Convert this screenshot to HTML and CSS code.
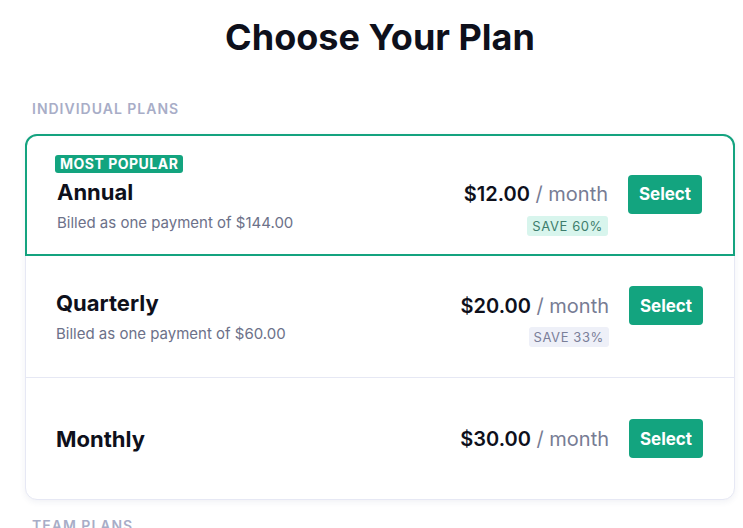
FILE: index.html
```html
<!DOCTYPE html>
<html lang="en">
<head>
<meta charset="utf-8">
<title>Choose Your Plan</title>
<link rel="stylesheet" href="styles.css">
</head>
<body>
<main class="page">
  <h1 class="page-title">Choose Your Plan</h1>

  <section class="group">
    <h2 class="group-label">Individual Plans</h2>
    <div class="plans">
      <div class="plan plan--featured">
        <span class="popular">Most Popular</span>
        <div class="plan-info">
          <div class="plan-name">Annual</div>
          <div class="plan-note">Billed as one payment of $144.00</div>
        </div>
        <div class="plan-buy">
          <div class="price"><span class="amount">$12.00</span> / month</div>
          <button class="select">Select</button>
          <span class="save save--green">SAVE 60%</span>
        </div>
      </div>

      <div class="plan">
        <div class="plan-info">
          <div class="plan-name">Quarterly</div>
          <div class="plan-note">Billed as one payment of $60.00</div>
        </div>
        <div class="plan-buy">
          <div class="price"><span class="amount">$20.00</span> / month</div>
          <button class="select">Select</button>
          <span class="save">SAVE 33%</span>
        </div>
      </div>

      <div class="plan plan--last">
        <div class="plan-info">
          <div class="plan-name">Monthly</div>
        </div>
        <div class="plan-buy">
          <div class="price"><span class="amount">$30.00</span> / month</div>
          <button class="select">Select</button>
        </div>
      </div>
    </div>
  </section>

  <section class="group">
    <h2 class="group-label">Team Plans</h2>
  </section>
</main>
</body>
</html>
```

FILE: styles.css
```css
* { box-sizing: border-box; }

html, body {
  margin: 0;
  padding: 0;
  background: #ffffff;
}

body {
  font-family: Inter, "Noto Sans", "Liberation Sans", sans-serif;
  color: #11131f;
  overflow: hidden;
}

.page {
  width: 710px;
  margin-left: 25px;
}

.page-title {
  margin: 15px 0 42px;
  text-align: center;
  font-size: 36px;
  font-weight: 700;
  line-height: 44px;
  color: #0e101b;
}

.group-label {
  margin: 0 0 17px 7px;
  font-size: 14px;
  line-height: 16px;
  font-weight: 600;
  letter-spacing: 1px;
  text-transform: uppercase;
  color: #a8adc7;
}

.plans {
  border: 1px solid #e6e8f4;
  border-radius: 12px;
  background: #fff;
  box-shadow: 0 2px 6px rgba(40, 50, 110, 0.07);
  margin-bottom: 18px;
}

.plan {
  position: relative;
  display: flex;
  align-items: center;
  justify-content: space-between;
  min-height: 122px;
  padding: 0 31px 0 30px;
  border-bottom: 1px solid #e6e8f4;
}

.plan--featured {
  margin: -1px -1px 0;
  min-height: 122px;
  padding-top: 20px;
  border: 2px solid #14a37f;
  border-radius: 12px 12px 0 0;
}

.plan--last {
  min-height: 121px;
  border-bottom: none;
}

.popular {
  position: absolute;
  top: 19px;
  left: 28px;
  height: 18px;
  padding: 0 5px;
  border-radius: 3px;
  background: #13a47f;
  color: #fff;
  font-size: 14px;
  line-height: 18px;
  font-weight: 700;
  letter-spacing: 0.5px;
  text-transform: uppercase;
}

.plan-name {
  font-size: 22px;
  line-height: 26px;
  font-weight: 700;
  color: #0e101b;
}

.plan-note {
  margin-top: 9px;
  font-size: 15px;
  line-height: 18px;
  color: #6c7189;
}

.plan-buy {
  display: grid;
  grid-template-columns: auto auto;
  column-gap: 20px;
  row-gap: 2px;
  align-items: center;
}

.price {
  font-size: 20px;
  line-height: 24px;
  color: #777c94;
  white-space: nowrap;
}

.amount {
  font-weight: 600;
  color: #0e101b;
}

.select {
  width: 74px;
  height: 39px;
  border: none;
  border-radius: 4px;
  background: #13a47f;
  color: #fff;
  font-family: inherit;
  font-size: 17px;
  font-weight: 700;
  padding: 0;
  cursor: pointer;
}

.save {
  grid-column: 1;
  justify-self: end;
  height: 20px;
  padding: 0 5px;
  border-radius: 3px;
  background: #eef0f8;
  color: #7a7f98;
  font-size: 13px;
  line-height: 20px;
  letter-spacing: 0.6px;
}

.save--green {
  background: #d8f5ed;
  color: #3d7d6c;
}
```
